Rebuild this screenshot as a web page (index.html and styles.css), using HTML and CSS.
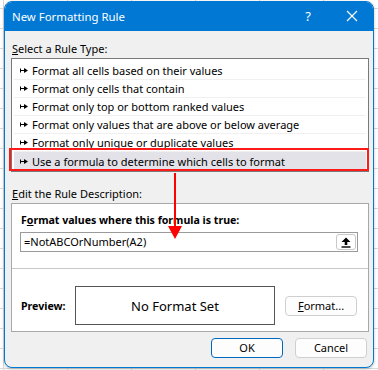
FILE: index.html
```html
<!DOCTYPE html>
<html>
<head>
<meta charset="utf-8">
<link rel="stylesheet" href="styles.css">
</head>
<body>
<div class="dialog">
  <div class="titlebar">
    <span class="title">New Formatting Rule</span>
    <span class="help">?</span>
    <span class="close">
      <svg width="12" height="12" viewBox="0 0 12 12"><path d="M1 1L11 11M11 1L1 11" stroke="#fff" stroke-width="1.2"/></svg>
    </span>
  </div>
  <div class="content">
    <div class="label"><u>S</u>elect a Rule Type:</div>
    <div class="list">
      <div class="row"><svg class="bullet" width="8" height="5" viewBox="0 0 8 5"><path d="M0.5 0.5V4.5M0.5 2.5H5" stroke="#000" stroke-width="1"/><path d="M4 0L8 2.5L4 5Z" fill="#000"/></svg>Format all cells based on their values</div>
      <div class="row"><svg class="bullet" width="8" height="5" viewBox="0 0 8 5"><path d="M0.5 0.5V4.5M0.5 2.5H5" stroke="#000" stroke-width="1"/><path d="M4 0L8 2.5L4 5Z" fill="#000"/></svg>Format only cells that contain</div>
      <div class="row"><svg class="bullet" width="8" height="5" viewBox="0 0 8 5"><path d="M0.5 0.5V4.5M0.5 2.5H5" stroke="#000" stroke-width="1"/><path d="M4 0L8 2.5L4 5Z" fill="#000"/></svg>Format only top or bottom ranked values</div>
      <div class="row"><svg class="bullet" width="8" height="5" viewBox="0 0 8 5"><path d="M0.5 0.5V4.5M0.5 2.5H5" stroke="#000" stroke-width="1"/><path d="M4 0L8 2.5L4 5Z" fill="#000"/></svg>Format only values that are above or below average</div>
      <div class="row"><svg class="bullet" width="8" height="5" viewBox="0 0 8 5"><path d="M0.5 0.5V4.5M0.5 2.5H5" stroke="#000" stroke-width="1"/><path d="M4 0L8 2.5L4 5Z" fill="#000"/></svg>Format only unique or duplicate values</div>
      <div class="row selected"><svg class="bullet" width="8" height="5" viewBox="0 0 8 5"><path d="M0.5 0.5V4.5M0.5 2.5H5" stroke="#000" stroke-width="1"/><path d="M4 0L8 2.5L4 5Z" fill="#000"/></svg>Use a formula to determine which cells to format</div>
      <div class="redbox"></div>
    </div>
    <div class="label label2"><u>E</u>dit the Rule Description:</div>
    <div class="group">
      <div class="bold-label">F<u>o</u>rmat values where this formula is true:</div>
      <div class="input">
        <span class="formula">=NotABCOrNumber(A2)</span>
        <span class="refbtn">
          <svg width="10" height="11" viewBox="0 0 10 11"><path d="M5 0.5L9.5 5H6.3V8H3.7V5H0.5Z" fill="#000"/><rect x="0.5" y="9.3" width="9" height="1.4" fill="#000"/></svg>
        </span>
      </div>
      <div class="sep"></div>
      <div class="preview-row">
        <span class="bold-label preview-label">Preview:</span>
        <div class="preview-box">No Format Set</div>
        <button class="btn format-btn"><u>F</u>ormat...</button>
      </div>
    </div>
    <div class="footer">
      <button class="btn ok">OK</button>
      <button class="btn">Cancel</button>
    </div>
  </div>
  <div class="arrow">
    <svg width="24" height="66" viewBox="0 0 24 66"><path d="M12 0V54" stroke="#f00" stroke-width="2"/><path d="M5 53H19L12 66Z" fill="#f00"/></svg>
  </div>
</div>
</body>
</html>
```
FILE: styles.css
```css
html, body {
  margin: 0;
  padding: 0;
}
body {
  width: 378px;
  height: 370px;
  overflow: hidden;
  background-color: #ffffff;
  background-image:
    linear-gradient(to right, #d9d9d9 1px, transparent 1px),
    linear-gradient(to bottom, #d9d9d9 1px, transparent 1px);
  background-size: 64px 20px;
  background-position: 3px 8px;
  font-family: "Noto Sans", "Open Sans", sans-serif;
  font-size: 11px;
  color: #000;
}
.dialog {
  position: relative;
  margin: 1px 0 0 4px;
  width: 370px;
  height: 367px;
  box-sizing: border-box;
  border: 1px solid #0078d4;
  border-radius: 8px;
  background: #f0f0f0;
  overflow: hidden;
  box-shadow: 0 1px 3px rgba(0,0,0,0.25);
}
.titlebar {
  height: 30px;
  background: #0078d4;
  color: #fff;
  display: flex;
  align-items: center;
  padding-left: 8px;
  margin-top: -1px;
  margin-left: -1px;
  margin-right: -1px;
}
.title {
  flex: 1;
  font-size: 11.4px;
  padding-top: 1px;
}
.help {
  width: 16px;
  text-align: center;
  font-size: 13px;
  margin-right: 30px;
}
.close {
  width: 12px;
  height: 12px;
  display: flex;
  margin-right: 16px;
}
.content {
  padding: 0 3px 0 6px;
}
.label {
  height: 16px;
  line-height: 16px;
  margin-top: 10px;
  padding-left: 1px;
}
.list {
  position: relative;
  margin-top: 1px;
  width: 358px;
  height: 114px;
  box-sizing: border-box;
  border: 1px solid #7a7a7a;
  background: #fff;
  padding: 3px 2px 0 2px;
}
.row {
  height: 18px;
  line-height: 17px;
  border-bottom: 1px solid #f0f0f0;
  box-sizing: border-box;
  display: flex;
  align-items: center;
  padding-left: 6px;
  white-space: nowrap;
}
.row .bullet {
  margin-right: 4px;
  flex: none;
}
.row.selected {
  background: #e2e2e8;
  border-bottom: none;
  height: 19px;
}
.redbox {
  position: absolute;
  left: -3px;
  top: 89px;
  width: 360px;
  height: 23px;
  box-sizing: border-box;
  border: 2px solid #ff1a1a;
}
.label2 {
  margin-top: 14px;
}
.group {
  margin-top: 1px;
  width: 358px;
  height: 129px;
  box-sizing: border-box;
  border: 1px solid #a8a8a8;
  background: #fff;
}
.bold-label {
  font-weight: bold;
  font-size: 10.6px;
}
.group > .bold-label {
  height: 16px;
  line-height: 16px;
  margin: 8px 0 0 9px;
}
.input {
  margin: 4px 0 0 8px;
  width: 338px;
  height: 20px;
  box-sizing: border-box;
  border: 1px solid #9a9a9a;
  background: #fff;
  display: flex;
  align-items: center;
  justify-content: space-between;
  padding: 0 1px 0 3px;
}
.formula {
  line-height: 18px;
}
.refbtn {
  width: 20px;
  height: 16px;
  box-sizing: border-box;
  border: 1px solid #c8c8c8;
  border-radius: 3px;
  background: #fff;
  display: flex;
  align-items: center;
  justify-content: center;
}
.sep {
  margin-top: 16px;
  height: 1px;
  background: #c8c8c8;
}
.preview-row {
  display: flex;
  align-items: center;
  margin-top: 17px;
  padding-left: 9px;
}
.preview-label {
  width: 54px;
}
.preview-box {
  width: 200px;
  height: 39px;
  box-sizing: border-box;
  border: 1px solid #555;
  background: #fff;
  display: flex;
  align-items: center;
  justify-content: center;
  font-size: 13px;
}
.btn {
  font-family: inherit;
  font-size: 11px;
  color: #000;
  background: #fdfdfd;
  border: 1px solid #cfcfcf;
  border-radius: 4px;
  width: 72px;
  height: 20px;
  padding: 0;
  line-height: 18px;
}
.format-btn {
  margin-left: 10px;
}
.footer {
  display: flex;
  justify-content: flex-end;
  gap: 12px;
  margin-top: 6px;
  padding-right: 3px;
}
.ok {
  border-color: #0067c0;
}
.arrow {
  position: absolute;
  left: 158px;
  top: 171px;
  width: 24px;
  height: 66px;
}
```
